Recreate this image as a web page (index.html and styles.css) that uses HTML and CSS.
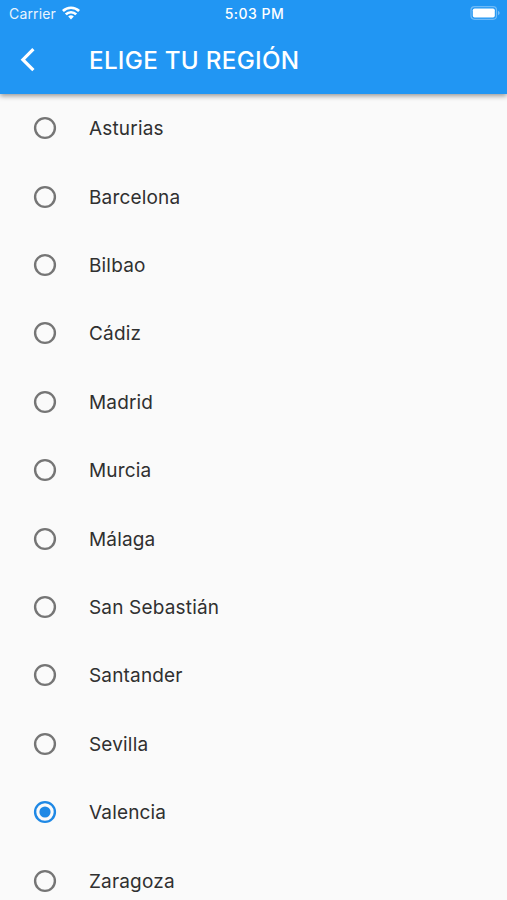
FILE: index.html
```html
<!DOCTYPE html>
<html lang="es">
<head>
<meta charset="utf-8">
<title>Elige tu región</title>
<link rel="stylesheet" href="styles.css">
</head>
<body>
<header class="appbar">
  <div class="status">
    <div class="carrier"><span class="carrier-name">Carrier</span>
      <svg class="wifi" width="18" height="14" viewBox="0 0 18 14"><g fill="none" stroke="#fff" stroke-width="2.700"><path d="M.9 5a11.700 11.700 0 0 1 16.200 0"/><path d="M3.800 8.400a7.400 7.400 0 0 1 10.400 0"/></g><path fill="#fff" d="M6.200 10.600a4.200 4.200 0 0 1 5.600 0L9 13.600z"/></svg>
    </div>
    <span class="time">5:03 PM</span>
    <svg class="battery" width="30" height="14" viewBox="0 0 30 14"><rect x="1" y=".7" width="25.500" height="12.600" rx="3.500" fill="none" stroke="#fff" stroke-opacity=".35" stroke-width="1.200"/><rect x="2.800" y="2.500" width="22" height="9" rx="1.800" fill="#fff"/><path d="M28 4.800q1.700.7 1.700 2.200T28 9.200z" fill="#fff" fill-opacity=".4"/></svg>
  </div>
  <div class="toolbar">
    <svg class="back" width="16" height="26" viewBox="0 0 16 26"><path d="M13.400 2.200L2.900 12.700l10.500 10.500" fill="none" stroke="#fff" stroke-width="3.200"/></svg>
    <h1 class="title">ELIGE TU REGIÓN</h1>
  </div>
</header>
<main class="list">
  <label class="row"><svg class="radio" viewBox="0 0 22 22"><circle class="ring" cx="11" cy="11" r="9.900"/></svg><span class="name">Asturias</span></label>
  <label class="row"><svg class="radio" viewBox="0 0 22 22"><circle class="ring" cx="11" cy="11" r="9.900"/></svg><span class="name">Barcelona</span></label>
  <label class="row"><svg class="radio" viewBox="0 0 22 22"><circle class="ring" cx="11" cy="11" r="9.900"/></svg><span class="name">Bilbao</span></label>
  <label class="row"><svg class="radio" viewBox="0 0 22 22"><circle class="ring" cx="11" cy="11" r="9.900"/></svg><span class="name">Cádiz</span></label>
  <label class="row"><svg class="radio" viewBox="0 0 22 22"><circle class="ring" cx="11" cy="11" r="9.900"/></svg><span class="name">Madrid</span></label>
  <label class="row"><svg class="radio" viewBox="0 0 22 22"><circle class="ring" cx="11" cy="11" r="9.900"/></svg><span class="name">Murcia</span></label>
  <label class="row"><svg class="radio" viewBox="0 0 22 22"><circle class="ring" cx="11" cy="11" r="9.900"/></svg><span class="name">Málaga</span></label>
  <label class="row"><svg class="radio" viewBox="0 0 22 22"><circle class="ring" cx="11" cy="11" r="9.900"/></svg><span class="name">San Sebastián</span></label>
  <label class="row"><svg class="radio" viewBox="0 0 22 22"><circle class="ring" cx="11" cy="11" r="9.900"/></svg><span class="name">Santander</span></label>
  <label class="row"><svg class="radio" viewBox="0 0 22 22"><circle class="ring" cx="11" cy="11" r="9.900"/></svg><span class="name">Sevilla</span></label>
  <label class="row"><svg class="radio selected" viewBox="0 0 22 22"><circle class="ring" cx="11" cy="11" r="9.900"/><circle class="dot" cx="11" cy="11" r="5.600"/></svg><span class="name">Valencia</span></label>
  <label class="row"><svg class="radio" viewBox="0 0 22 22"><circle class="ring" cx="11" cy="11" r="9.900"/></svg><span class="name">Zaragoza</span></label>
</main>
</body>
</html>
```
FILE: styles.css
```css
* { box-sizing: border-box; }
body { margin: 0; height: 900px; overflow: hidden; background: #fafafa; font-family: Inter, "Liberation Sans", sans-serif; display: flex; flex-direction: column; }
.appbar { height: 94px; flex: none; background: #2196f3; color: #fff; box-shadow: 0 2px 5px rgba(0,0,0,.4); z-index: 1; }
.status { height: 26px; display: grid; grid-template-columns: 1fr auto 1fr; align-items: center; padding: 1px 7px 0 9px; font-size: 14px; }
.carrier { display: flex; align-items: center; gap: 6px; }
.carrier-name { letter-spacing: .15px; opacity: .9; }
.wifi { margin-top: -2px; }
.time { font-weight: 500; letter-spacing: .5px; }
.battery { justify-self: end; margin-top: -1px; }
.toolbar { height: 67px; display: flex; align-items: center; padding-left: 20px; }
.back { flex: none; }
.title { margin: 1px 0 0 53px; font-size: 24.200px; font-weight: 500; letter-spacing: .3px; white-space: nowrap; }
.list { flex: none; }
.row { height: 68.42px; display: flex; align-items: center; padding-left: 34px; }
.radio { width: 22px; height: 22px; flex: none; overflow: visible; }
.ring { fill: none; stroke: #757575; stroke-width: 2.4; }
.selected .ring { stroke: #1e88e5; }
.dot { fill: #1e88e5; }
.name { margin: 1px 0 0 33px; font-size: 19px; color: #303030; letter-spacing: .17px; white-space: nowrap; }
```
